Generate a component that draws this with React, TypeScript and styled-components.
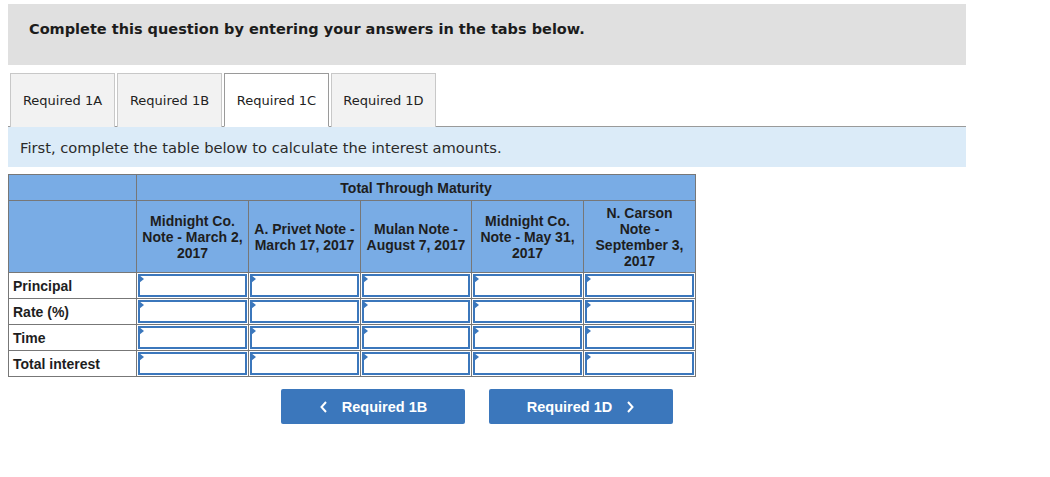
import React from "react";
import styled, { createGlobalStyle } from "styled-components";

const GlobalStyle = createGlobalStyle`
  body {
    margin: 0;
    background: #ffffff;
    font-family: "DejaVu Sans", Verdana, sans-serif;
    color: #1a1a1a;
  }
`;

const tabs = ["Required 1A", "Required 1B", "Required 1C", "Required 1D"];

const columns = [
  { w: 112, lines: ["Midnight Co.", "Note - March 2,", "2017"] },
  { w: 112, lines: ["A. Privet Note -", "March 17, 2017"] },
  { w: 111, lines: ["Mulan Note -", "August 7, 2017"] },
  { w: 112, lines: ["Midnight Co.", "Note - May 31,", "2017"] },
  { w: 112, lines: ["N. Carson", "Note -", "September 3,", "2017"] },
];

const rows = ["Principal", "Rate (%)", "Time", "Total interest"];

export default function App() {
  return (
    <Page>
      <GlobalStyle />
      <Banner>Complete this question by entering your answers in the tabs below.</Banner>

      <TabBar>
        {tabs.map((t) => (
          <Tab key={t} $active={t === "Required 1C"}>
            {t}
          </Tab>
        ))}
      </TabBar>

      <Info>First, complete the table below to calculate the interest amounts.</Info>

      <Table>
        <colgroup>
          <col style={{ width: 128 }} />
          {columns.map((c) => (
            <col key={c.lines.join(" ")} style={{ width: c.w }} />
          ))}
        </colgroup>
        <thead>
          <tr>
            <HeadCell $h={25} />
            <HeadCell $h={25} colSpan={5}>
              Total Through Maturity
            </HeadCell>
          </tr>
          <tr>
            <HeadCell $h={71} />
            {columns.map((c) => (
              <HeadCell key={c.lines.join(" ")} $h={71}>
                {c.lines.map((line) => (
                  <HeadLine key={line}>{line}</HeadLine>
                ))}
              </HeadCell>
            ))}
          </tr>
        </thead>
        <tbody>
          {rows.map((r) => (
            <tr key={r}>
              <LabelCell>{r}</LabelCell>
              {columns.map((c) => (
                <InputCell key={c.lines.join(" ")}>
                  <Marker />
                  <AmountInput type="text" />
                </InputCell>
              ))}
            </tr>
          ))}
        </tbody>
      </Table>

      <NavRow>
        <NavButton>
          <Chevron viewBox="0 0 10 14">
            <path d="M7 2 L2.5 7 L7 12" />
          </Chevron>
          Required 1B
        </NavButton>
        <NavButton>
          Required 1D
          <Chevron viewBox="0 0 10 14">
            <path d="M3 2 L7.5 7 L3 12" />
          </Chevron>
        </NavButton>
      </NavRow>
    </Page>
  );
}

const Page = styled.div`
  width: 958px;
  padding: 4px 0 0 8px;
`;

const Banner = styled.div`
  height: 61px;
  box-sizing: border-box;
  background: #e0e0e0;
  padding: 17px 0 0 21px;
  font-size: 14.5px;
  font-weight: bold;
  color: #1c1c1c;
`;

const TabBar = styled.div`
  display: flex;
  gap: 2px;
  margin-top: 8px;
  padding-left: 2px;
  border-bottom: 1px solid #9a9a9a;
  height: 54px;
  box-sizing: border-box;
`;

const Tab = styled.div<{ $active?: boolean }>`
  width: 105px;
  height: 54px;
  box-sizing: border-box;
  display: flex;
  align-items: center;
  justify-content: center;
  border: 1px solid ${(p) => (p.$active ? "#9a9a9a" : "#c8c8c8")};
  border-bottom: ${(p) => (p.$active ? "1px solid #ffffff" : "none")};
  background: ${(p) => (p.$active ? "#ffffff" : "#f2f2f2")};
  font-size: 13px;
  color: #222;
  white-space: nowrap;
  position: relative;
  z-index: 1;
`;

const Info = styled.div`
  height: 40px;
  box-sizing: border-box;
  background: #dbebf8;
  padding: 12px 0 0 12px;
  font-size: 14.7px;
  color: #2a2a2a;
`;

const Table = styled.table`
  margin-top: 7px;
  border-collapse: collapse;
  table-layout: fixed;
  width: 687px;
  font-family: "Liberation Sans", Arial, sans-serif;
  font-size: 14px;
  font-weight: bold;
  color: #1e1e1e;
`;

const HeadCell = styled.th<{ $h: number }>`
  height: ${(p) => p.$h}px;
  padding: 0 1px;
  background: #79ace5;
  border: 1px solid #777777;
  text-align: center;
  vertical-align: middle;
  font-weight: bold;
`;

const HeadLine = styled.div`
  line-height: 16px;
  white-space: nowrap;
`;

const LabelCell = styled.td`
  padding: 0 4px;
  border: 1px solid #777777;
  text-align: left;
  vertical-align: middle;
`;

const InputCell = styled.td`
  padding: 1px 1px 1px 1px;
  border: 1px solid #777777;
  position: relative;
  vertical-align: top;
`;

const Marker = styled.span`
  position: absolute;
  top: 2px;
  left: 2px;
  width: 0;
  height: 0;
  border-top: 4px solid transparent;
  border-bottom: 4px solid transparent;
  border-left: 5px solid #3b77bc;
`;

const AmountInput = styled.input`
  display: block;
  width: 100%;
  height: 23px;
  box-sizing: border-box;
  border: 2px solid #3b77bc;
  margin: 0;
  padding: 0 4px;
  background: #ffffff;
  outline: none;
  font: inherit;
`;

const NavRow = styled.div`
  display: flex;
  gap: 24px;
  margin-top: 12px;
  padding-left: 273px;
`;

const NavButton = styled.button`
  width: 184px;
  height: 35px;
  display: flex;
  align-items: center;
  justify-content: center;
  gap: 13px;
  border: none;
  border-radius: 2px;
  background: #3b77bc;
  color: #ffffff;
  font-family: "Liberation Sans", Arial, sans-serif;
  font-size: 14.5px;
  font-weight: bold;
  cursor: pointer;
`;

const Chevron = styled.svg`
  width: 10px;
  height: 14px;
  fill: none;
  stroke: #ffffff;
  stroke-width: 2;
`;
